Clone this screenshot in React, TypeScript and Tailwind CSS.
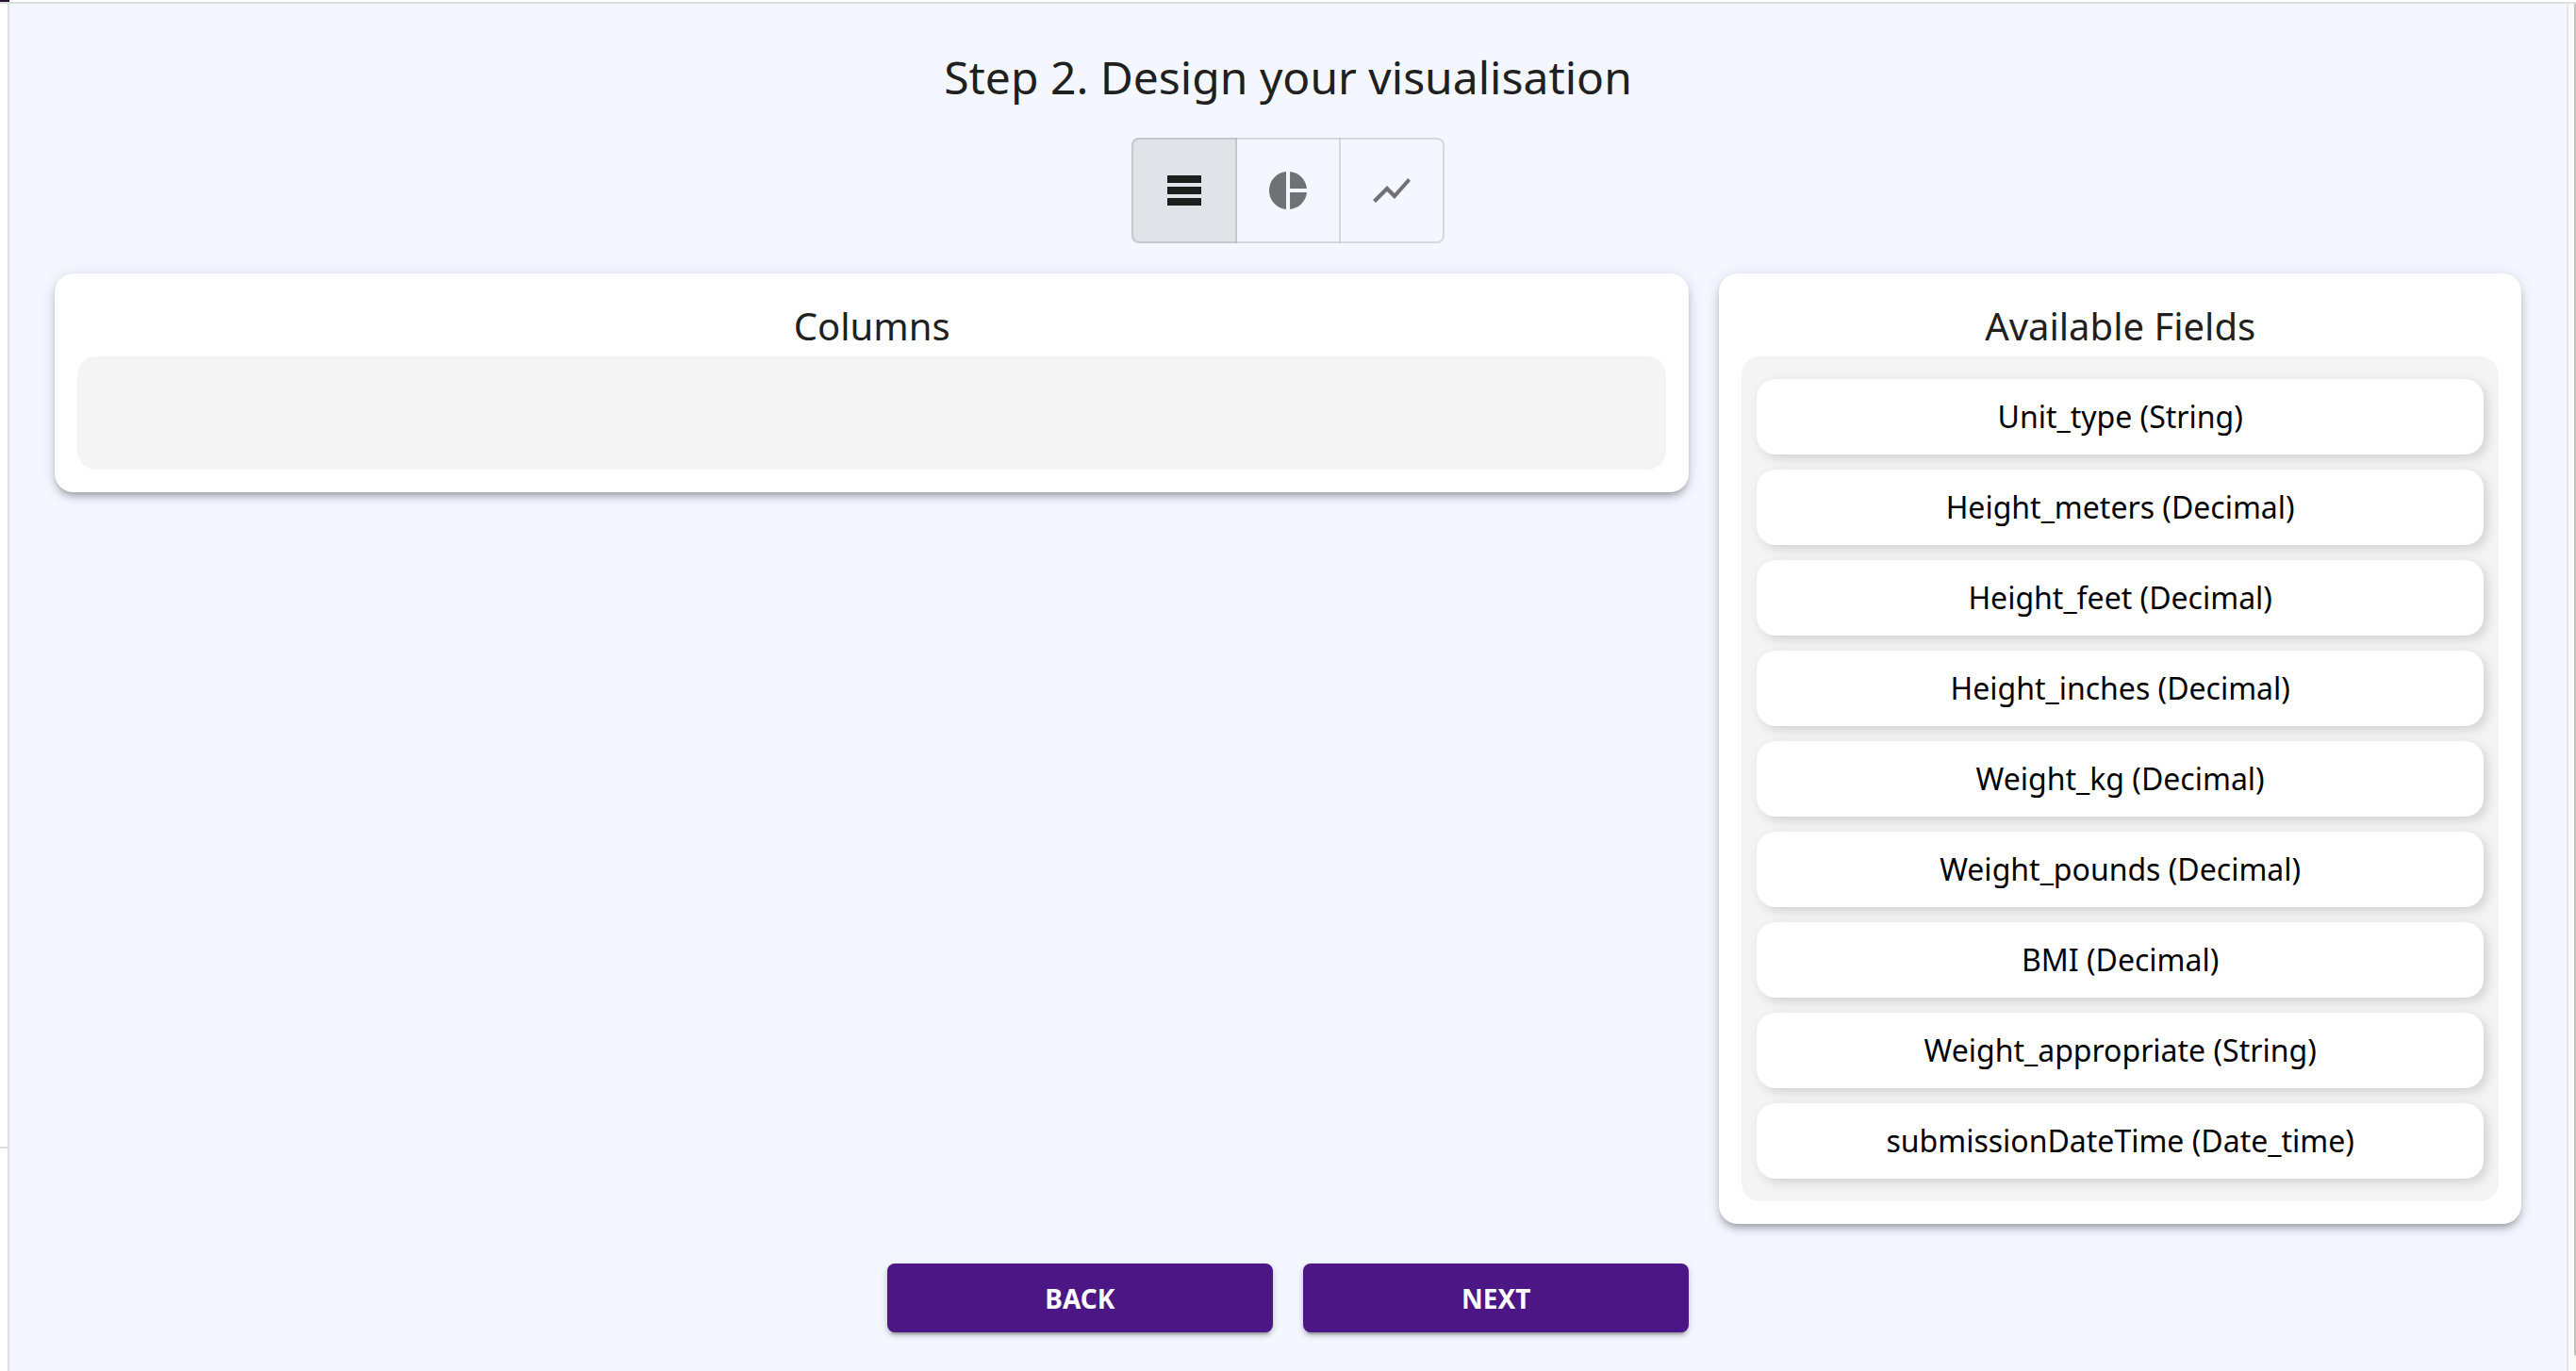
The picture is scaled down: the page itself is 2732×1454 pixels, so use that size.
import React, { useState } from "react";

const fields = [
  "Unit_type (String)",
  "Height_meters (Decimal)",
  "Height_feet (Decimal)",
  "Height_inches (Decimal)",
  "Weight_kg (Decimal)",
  "Weight_pounds (Decimal)",
  "BMI (Decimal)",
  "Weight_appropriate (String)",
  "submissionDateTime (Date_time)",
];

const charts = [
  { name: "Table", d: "M3 16h18v4H3zM3 10h18v4H3zM3 4h18v4H3z" },
  {
    name: "Pie chart",
    d: "M11 2v20c-5.07-.5-9-4.79-9-10s3.93-9.5 9-10zm2.03 0v8.99H22c-.47-4.74-4.24-8.52-8.97-8.99zm0 11.01V22c4.74-.47 8.5-4.25 8.97-8.99h-8.97z",
  },
  {
    name: "Line chart",
    d: "M3.5 18.49l6-6.01 4 4L22 6.92l-1.41-1.41-7.09 7.97-4-4L2 16.99z",
  },
];

const cardClass =
  "rounded-[20px] bg-white p-6 shadow-[0_6px_6px_-4px_rgba(0,0,0,0.2),0_6px_8px_0_rgba(0,0,0,0.14),0_2px_16px_0_rgba(0,0,0,0.12)]";
const actionClass =
  "h-[73px] rounded-lg bg-[#4c1785] text-[28px] font-bold text-white shadow-[0_6px_2px_-4px_rgba(0,0,0,0.2),0_4px_4px_0_rgba(0,0,0,0.14),0_2px_10px_0_rgba(0,0,0,0.12)]";

function ChartPicker() {
  const [selected, setSelected] = useState("Table");
  return (
    <div role="group" aria-label="Chart type" className="mt-8 flex justify-center">
      {charts.map((chart) => (
        <button
          key={chart.name}
          type="button"
          aria-label={chart.name}
          aria-pressed={selected === chart.name}
          onClick={() => setSelected(chart.name)}
          className="-ml-0.5 border-2 border-black/12 p-[30px] text-[#707175] not-first:border-l-transparent first:ml-0 first:rounded-l-lg last:rounded-r-lg aria-pressed:bg-[#e2e3e8] aria-pressed:text-[#1c1e1d]"
        >
          <svg viewBox="0 0 24 24" className="size-12 fill-current" aria-hidden="true">
            <path d={chart.d} />
          </svg>
        </button>
      ))}
    </div>
  );
}

export default function App() {
  return (
    <div className="flex min-h-screen bg-white font-['Noto_Sans',sans-serif] text-[#1f2120]">
      <aside className="flex w-2.5 shrink-0 flex-col">
        <div className="h-0.5 bg-[#26112f]" />
        <div className="h-[1216px] border-y-2 border-r-2 border-[#dfdfdf]" />
        <div className="grow border-r-2 border-[#dfdfdf]" />
      </aside>
      <div className="mt-0.5 min-w-0 grow border-t-2 border-[#dfdfdf] bg-[#f4f7ff] px-12 pt-[46px]">
        <h1 className="text-center text-5xl leading-[64px]">Step 2. Design your visualisation</h1>
        <ChartPicker />
        <main className="mt-8 grid grid-cols-12 items-start gap-x-8">
          <section className={`col-span-8 ${cardClass}`}>
            <h2 className="text-center text-[40px] leading-[64px]">Columns</h2>
            <div className="h-[120px] rounded-[20px] bg-[#f4f4f4]" />
          </section>
          <section className={`col-span-4 ${cardClass}`}>
            <h2 className="text-center text-[40px] leading-[64px]">Available Fields</h2>
            <ul className="flex flex-col gap-4 rounded-[20px] bg-[#f4f4f4] px-4 py-6">
              {fields.map((field) => (
                <li
                  key={field}
                  draggable
                  className="flex h-20 items-center justify-center rounded-[20px] bg-white text-[32px] text-black shadow-[4px_4px_12px_0_rgba(0,0,0,0.14)]"
                >
                  {field}
                </li>
              ))}
            </ul>
          </section>
          <button type="button" className={`col-span-2 col-start-5 mt-[42px] ${actionClass}`}>
            BACK
          </button>
          <button type="button" className={`col-span-2 mt-[42px] ${actionClass}`}>
            NEXT
          </button>
        </main>
      </div>
      <div className="mt-0.5 flex w-2.5 shrink-0 border-t-2 border-l-2 border-t-[#dfdfdf] border-l-[#e6e6e6] bg-[#fafafa]">
        <div className="ml-auto h-[1434px] w-0.5 rounded-bl-sm bg-[#c1c1c1]" />
      </div>
    </div>
  );
}
